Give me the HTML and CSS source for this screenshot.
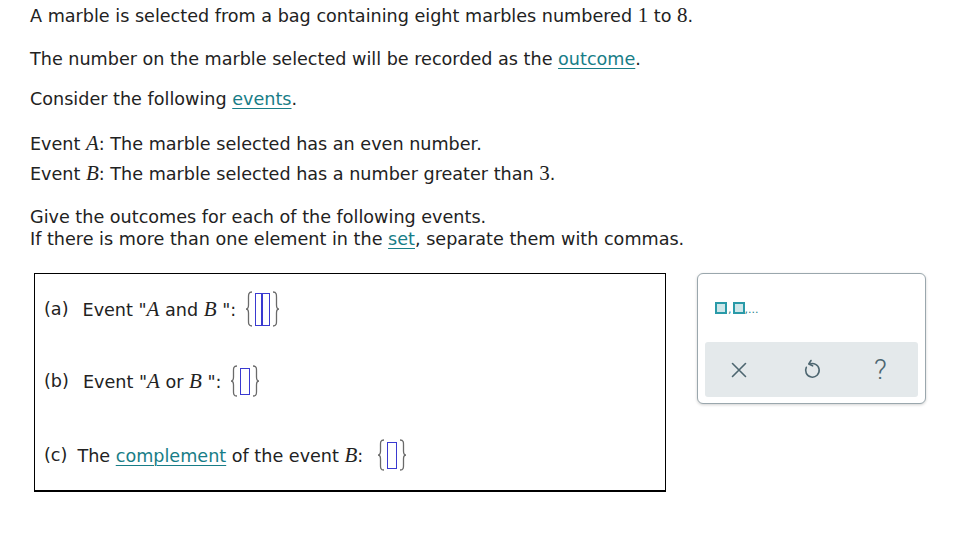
FILE: index.html
```html
<!DOCTYPE html>
<html>
<head>
<meta charset="utf-8">
<link rel="stylesheet" href="styles.css">
</head>
<body>
<div class="page">
  <p class="p1">A marble is selected from a bag containing eight marbles numbered <span class="m">1</span> to <span class="m">8</span>.</p>
  <p class="p2">The number on the marble selected will be recorded as the <a class="lnk">outcome</a>.</p>
  <p class="p3">Consider the following <a class="lnk">events</a>.</p>
  <p class="p4">Event <span class="mi">A</span>: The marble selected has an even number.</p>
  <p class="p5">Event <span class="mi">B</span>: The marble selected has a number greater than <span class="m">3</span>.</p>
  <p class="p6">Give the outcomes for each of the following events.<br>If there is more than one element in the <a class="lnk">set</a>, separate them with commas.</p>

  <div class="work">
    <div class="qbox">
      <div class="row ra">
        <span class="lbl">(a)</span>
        <span>Event "<span class="mi">A</span> and <span class="mi">B</span> ":</span>
        <span class="set tall">
          <svg class="br" width="8" height="36" viewBox="0 0 8 36"><path d="M7 1 C3 1 3.5 4 3.5 8 L3.5 14 C3.5 17 2.5 18 1 18 C2.5 18 3.5 19 3.5 22 L3.5 28 C3.5 32 3 35 7 35" stroke="#6a6a6a" stroke-width="1.3" fill="none"/></svg>
          <span class="slot dbl"><i></i></span>
          <svg class="br" width="8" height="36" viewBox="0 0 8 36"><path d="M1 1 C5 1 4.5 4 4.5 8 L4.5 14 C4.5 17 5.5 18 7 18 C5.5 18 4.5 19 4.5 22 L4.5 28 C4.5 32 5 35 1 35" stroke="#6a6a6a" stroke-width="1.3" fill="none"/></svg>
        </span>
      </div>
      <div class="row rb">
        <span class="lbl">(b)</span>
        <span>Event "<span class="mi">A</span> or <span class="mi">B</span> ":</span>
        <span class="set">
          <svg class="br" width="8" height="32" viewBox="0 0 8 32"><path d="M7 1 C3 1 3.5 4 3.5 7 L3.5 12 C3.5 15 2.5 16 1 16 C2.5 16 3.5 17 3.5 20 L3.5 25 C3.5 28 3 31 7 31" stroke="#6a6a6a" stroke-width="1.3" fill="none"/></svg>
          <span class="slot"></span>
          <svg class="br" width="8" height="32" viewBox="0 0 8 32"><path d="M1 1 C5 1 4.5 4 4.5 7 L4.5 12 C4.5 15 5.5 16 7 16 C5.5 16 4.5 17 4.5 20 L4.5 25 C4.5 28 5 31 1 31" stroke="#6a6a6a" stroke-width="1.3" fill="none"/></svg>
        </span>
      </div>
      <div class="row rc">
        <span class="lbl">(c)</span>
        <span>The <a class="lnk">complement</a> of the event <span class="mi">B</span>:</span>
        <span class="set wide">
          <svg class="br" width="8" height="32" viewBox="0 0 8 32"><path d="M7 1 C3 1 3.5 4 3.5 7 L3.5 12 C3.5 15 2.5 16 1 16 C2.5 16 3.5 17 3.5 20 L3.5 25 C3.5 28 3 31 7 31" stroke="#6a6a6a" stroke-width="1.3" fill="none"/></svg>
          <span class="slot"></span>
          <svg class="br" width="8" height="32" viewBox="0 0 8 32"><path d="M1 1 C5 1 4.5 4 4.5 7 L4.5 12 C4.5 15 5.5 16 7 16 C5.5 16 4.5 17 4.5 20 L4.5 25 C4.5 28 5 31 1 31" stroke="#6a6a6a" stroke-width="1.3" fill="none"/></svg>
        </span>
      </div>
    </div>

    <div class="panel">
      <div class="tools">
        <span class="tpl"><span class="sq"></span><span class="cm">,</span><span class="sq"></span><span class="dots">,...</span></span>
      </div>
      <div class="bar">
        <svg class="ic" width="18" height="18" viewBox="0 0 18 18"><path d="M2.5 2.5 L15.5 15.5 M15.5 2.5 L2.5 15.5" stroke="#4d6670" stroke-width="1.6" fill="none" stroke-linecap="round"/></svg>
        <svg class="ic" width="20" height="22" viewBox="0 0 20 22"><path d="M7.5 5.2 A6.8 6.8 0 1 1 4.3 8.3" stroke="#4d6670" stroke-width="1.6" fill="none" stroke-linecap="round"/><path d="M9 1.5 L6.8 5 L10.6 6.8" stroke="#4d6670" stroke-width="1.6" fill="none" stroke-linecap="round" stroke-linejoin="round"/></svg>
        <span class="q">?</span>
      </div>
    </div>
  </div>
</div>
</body>
</html>
```

FILE: styles.css
```css
html, body {
  margin: 0;
  padding: 0;
  background: #ffffff;
}
body {
  font-family: "DejaVu Sans", Verdana, sans-serif;
  font-size: 17.6px;
  color: #222222;
}
.page {
  padding: 4px 0 0 30px;
}
p {
  margin: 0;
  line-height: 23px;
}
.p2 { margin-top: 20px; }
.p3 { margin-top: 17px; }
.p4 { margin-top: 21px; }
.p5 { margin-top: 6px; }
.p6 { margin-top: 20px; line-height: 22px; }
.m {
  font-family: "Liberation Serif", "Times New Roman", serif;
  font-size: 21px;
}
.mi {
  font-family: "Liberation Serif", "Times New Roman", serif;
  font-style: italic;
  font-size: 21px;
}
.lnk {
  color: #187d87;
  text-decoration: underline;
  text-underline-offset: 3px;
  text-decoration-thickness: 1px;
}
.work {
  display: flex;
  align-items: flex-start;
  margin-top: 23px;
  margin-left: 4px;
}
.qbox {
  width: 632px;
  height: 219px;
  border: 1px solid #000;
  border-bottom-width: 2px;
  display: flex;
  flex-direction: column;
  padding-left: 9px;
  box-sizing: border-box;
}
.row {
  display: flex;
  align-items: center;
  gap: 8px;
  height: 36px;
}
.ra { margin-top: 17px; }
.rb { margin-top: 36px; }
.rc { margin-top: 38px; }
.lbl { margin-right: 6px; }
.rc .lbl { margin-right: 2px; }
.set {
  display: inline-flex;
  align-items: center;
  gap: 2px;
  margin-left: 1px;
}
.set.wide { margin-left: 6px; }
.br { display: block; }
.slot {
  width: 10px;
  height: 27px;
  border: 1.5px solid #3a3ad0;
  box-sizing: border-box;
}
.tall .slot { height: 33px; }
.slot.dbl {
  width: 15px;
  position: relative;
}
.slot.dbl i {
  position: absolute;
  left: 5px;
  top: 0;
  bottom: 0;
  width: 1.5px;
  background: #3a3ad0;
}
.panel {
  margin-left: 31px;
  width: 229px;
  height: 131px;
  box-sizing: border-box;
  border: 1px solid #9aa7ad;
  border-radius: 6px;
  box-shadow: 0 1px 3px rgba(0,0,0,0.18);
  background: #fff;
  padding: 0 7px;
  display: flex;
  flex-direction: column;
}
.tools {
  height: 68px;
  display: flex;
  align-items: center;
  padding-left: 10px;
}
.tpl {
  display: flex;
  align-items: flex-end;
}
.sq {
  width: 12px;
  height: 12px;
  border: 2px solid #2a9aa8;
  background: #cfe7ea;
  box-sizing: border-box;
  display: inline-block;
}
.cm, .dots {
  font-size: 11px;
  color: #2a7f8c;
  line-height: 8px;
}
.cm { margin: 0 1px; }
.bar {
  height: 55px;
  background: #e4e9eb;
  border-radius: 3px;
  display: flex;
  align-items: center;
  padding-left: 25px;
  gap: 54px;
}
.bar .q { margin-left: -2px; }
.ic { display: block; }
.q {
  font-family: Roboto, "DejaVu Sans", sans-serif;
  font-size: 28px;
  color: #4d6670;
  font-weight: 300;
}
```
